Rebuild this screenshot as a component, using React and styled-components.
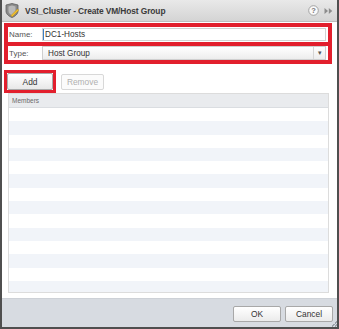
import React from 'react';
import styled, { createGlobalStyle } from 'styled-components';

const GlobalStyle = createGlobalStyle`
  html, body {
    margin: 0;
    padding: 0;
    background: #ffffff;
    overflow: hidden;
  }
  body {
    font-family: 'Liberation Sans', Arial, sans-serif;
  }
`;

const ROW_COUNT = 14;

function TitleIcon() {
  return (
    <svg width="14" height="15" viewBox="0 0 14 15">
      <path d="M1 2 L7 0.5 L13 2 L13 8 C13 11 10 13.5 7 14.5 C4 13.5 1 11 1 8 Z" fill="#8a8a8a" stroke="#5e5e5e" strokeWidth="0.8" />
      <path d="M3.5 3.5 L7 2.6 L10.5 3.5 L10.5 8 C10.5 10 9 11.5 7 12.3 C5 11.5 3.5 10 3.5 8 Z" fill="#b9b9b9" />
      <path d="M6 12.5 L12.5 6 L13.8 7.3 L7.3 13.8 Z" fill="#f2c12e" stroke="#b88a10" strokeWidth="0.5" />
    </svg>
  );
}

function HelpIcon() {
  return (
    <svg width="11" height="11" viewBox="0 0 11 11">
      <circle cx="5.5" cy="5.5" r="4.8" fill="#fafafa" stroke="#9a9a9a" strokeWidth="0.9" />
      <text x="5.5" y="8.3" textAnchor="middle" fontSize="7.5" fontFamily="Liberation Sans, Arial, sans-serif" fontWeight="bold" fill="#777">?</text>
    </svg>
  );
}

function CollapseIcon() {
  return (
    <svg width="9" height="8" viewBox="0 0 9 8">
      <path d="M0.5 1 L4 4 L0.5 7 Z" fill="#8c8c8c" />
      <path d="M4.8 1 L8.3 4 L4.8 7 Z" fill="#8c8c8c" />
    </svg>
  );
}

export default function App() {
  const rows = [];
  for (let i = 0; i < ROW_COUNT; i++) {
    rows.push(<MemberRow key={i} $striped={i % 2 === 1} />);
  }

  return (
    <>
      <GlobalStyle />
      <Dialog>
        <TitleBar>
          <TitleIcon />
          <Title>VSI_Cluster - Create VM/Host Group</Title>
          <TitleTools>
            <HelpIcon />
            <CollapseIcon />
          </TitleTools>
        </TitleBar>

        <Content>
          <FieldFrame>
            <FieldRow>
              <FieldLabel>Name:</FieldLabel>
              <TextInput>
                <Caret />
                DC1-Hosts
              </TextInput>
            </FieldRow>
            <FieldRow>
              <FieldLabel>Type:</FieldLabel>
              <Select>
                <SelectValue>Host Group</SelectValue>
                <SelectArrow>▾</SelectArrow>
              </Select>
            </FieldRow>
          </FieldFrame>

          <Toolbar>
            <Highlight>
              <Button>Add</Button>
            </Highlight>
            <Button disabled>Remove</Button>
          </Toolbar>

          <MembersTable>
            <TableHeader>Members</TableHeader>
            <TableBody>{rows}</TableBody>
          </MembersTable>
        </Content>

        <Footer>
          <FooterButton>OK</FooterButton>
          <FooterButton>Cancel</FooterButton>
          <Grip />
        </Footer>
      </Dialog>
    </>
  );
}

App.displayName = 'App';

const Dialog = styled.div`
  width: 339px;
  height: 329px;
  box-sizing: border-box;
  border: 2px solid #4f4f4f;
  border-top: 0;
  background: #ffffff;
  display: flex;
  flex-direction: column;
  overflow: hidden;
`;

const TitleBar = styled.div`
  height: 22px;
  box-sizing: border-box;
  flex: none;
  display: flex;
  align-items: center;
  gap: 6px;
  padding: 0 4px 0 3px;
  background: linear-gradient(#e9e9e9, #d4d4d4);
  border-bottom: 1px solid #bdbdbd;
`;

const Title = styled.div`
  flex: 1;
  font-size: 8.4px;
  font-weight: bold;
  letter-spacing: -0.1px;
  color: #3a3a3a;
  white-space: nowrap;
`;

const TitleTools = styled.div`
  display: flex;
  align-items: center;
  gap: 5px;
`;

const Content = styled.div`
  flex: 1;
  display: flex;
  flex-direction: column;
  padding: 1px 5px 0 2px;
`;

const FieldFrame = styled.div`
  border: 4px solid #e21f2d;
  background: #ffffff;
`;

const FieldRow = styled.div`
  height: 15px;
  display: flex;
  align-items: stretch;
  background: #ffffff;

  & + & {
    border-top: 4px solid #e21f2d;
    height: 14px;
  }
`;

const FieldLabel = styled.div`
  width: 34px;
  flex: none;
  padding-left: 1px;
  box-sizing: border-box;
  display: flex;
  align-items: center;
  font-size: 8px;
  color: #555555;
`;

const TextInput = styled.div`
  flex: 1;
  display: flex;
  align-items: center;
  margin: 1px 2px 1px 0;
  border: 1px solid #d2d2d2;
  font-size: 8.2px;
  color: #333333;
`;

const Caret = styled.span`
  width: 1px;
  height: 11px;
  background: #3b7fc4;
  margin-right: 1px;
`;

const Select = styled.div`
  flex: 1;
  display: flex;
  align-items: stretch;
  margin: 0 2px 0 0;
  border: 1px solid #cfcfcf;
  background: linear-gradient(#ffffff, #ededed);
`;

const SelectValue = styled.div`
  flex: 1;
  display: flex;
  align-items: center;
  padding-left: 5px;
  font-size: 8.2px;
  color: #333333;
`;

const SelectArrow = styled.div`
  width: 11px;
  border-left: 1px solid #d6d6d6;
  display: flex;
  align-items: center;
  justify-content: center;
  font-size: 7px;
  color: #555555;
`;

const Toolbar = styled.div`
  display: flex;
  align-items: center;
  gap: 5px;
  margin-top: 6px;
`;

const Highlight = styled.div`
  border: 3px solid #e21f2d;
  display: flex;
`;

const Button = styled.button`
  width: ${(p) => (p.disabled ? '43px' : '46px')};
  height: ${(p) => (p.disabled ? '16px' : '17px')};
  padding: 0;
  font-family: 'Liberation Sans', Arial, sans-serif;
  font-size: 8.4px;
  color: ${(p) => (p.disabled ? '#b0b0b0' : '#333333')};
  background: ${(p) => (p.disabled ? '#fbfbfb' : 'linear-gradient(#ffffff, #e8e8e8)')};
  border: 1px solid ${(p) => (p.disabled ? '#d8d8d8' : '#a9a9a9')};
  border-radius: 2px;
`;

const MembersTable = styled.div`
  margin: 0 3px 0 4px;
  height: 200px;
  box-sizing: border-box;
  border: 1px solid #dcdcdc;
  display: flex;
  flex-direction: column;
  overflow: hidden;
`;

const TableHeader = styled.div`
  height: 13px;
  flex: none;
  display: flex;
  align-items: center;
  padding-left: 3px;
  background: #e9ebee;
  border-bottom: 1px solid #dadde1;
  font-size: 6.5px;
  color: #6a6a6a;
`;

const TableBody = styled.div`
  flex: 1;
  display: flex;
  flex-direction: column;
`;

const MemberRow = styled.div`
  height: 13.3px;
  flex: none;
  background: ${(p) => (p.$striped ? '#f1f4f9' : '#ffffff')};
`;

const Footer = styled.div`
  height: 29px;
  flex: none;
  margin-top: 5px;
  box-sizing: border-box;
  display: flex;
  justify-content: flex-end;
  align-items: flex-start;
  gap: 4px;
  padding: 7px 4px 0 0;
  background: #d7dbe1;
  border-top: 1px solid #cdd1d7;
  position: relative;
`;

const FooterButton = styled.button`
  width: 48px;
  height: 16px;
  padding: 0;
  font-family: 'Liberation Sans', Arial, sans-serif;
  font-size: 8.4px;
  color: #333333;
  background: linear-gradient(#ffffff, #ebebeb);
  border: 1px solid #a8a8a8;
  border-radius: 2px;
`;

const Grip = styled.div`
  position: absolute;
  right: 0;
  bottom: 0;
  width: 6px;
  height: 6px;
  background: linear-gradient(135deg, transparent 50%, #9aa0a8 50%, #9aa0a8 60%, transparent 60%, transparent 75%, #9aa0a8 75%, #9aa0a8 85%, transparent 85%);
`;
